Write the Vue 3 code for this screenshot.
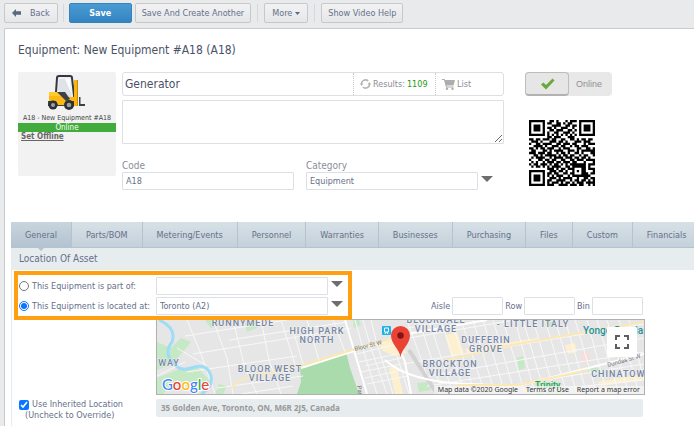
<script setup>
import { ref } from 'vue'

const tabs = ['General', 'Parts/BOM', 'Metering/Events', 'Personnel', 'Warranties', 'Businesses', 'Purchasing', 'Files', 'Custom', 'Financials']
const activeTab = ref('General')
const name = ref('Generator')
const description = ref('')
const code = ref('A18')
const category = ref('Equipment')
const placement = ref('located')
const parent = ref('')
const location = ref('Toronto (A2)')
const slots = ref([
  { label: 'Aisle', id: 'aisle', value: '' },
  { label: 'Row', id: 'row', value: '' },
  { label: 'Bin', id: 'bin', value: '' }
])
const inherited = ref(true)
const online = ref(true)

const qrRows = [
  '11111110011010001011101111111',
  '10000010110011010110001000001',
  '10111010001111001101101011101',
  '10111010110100111001001011101',
  '10111010011011100110101011101',
  '10000010100110011101001000001',
  '11111110101010101010101111111',
  '00000000110111000111000000000',
  '11011011101100110011010110110',
  '01110100011101101000111011100',
  '10011011110011011101100010111',
  '00111101001110110010110111000',
  '11010110111001011100011001101',
  '01100011010111100111010111111',
  '11101110110010110100110100011',
  '00110101111101011011001011001',
  '01011110010111101110110110100',
  '10001101101100110011011101111',
  '01010010111011011101100010001',
  '10110111010110101011111110111',
  '01011010101111001101111110100',
  '00000000111010110111000110111',
  '11111110011101101001010110001',
  '10000010110110011011000111011',
  '10111010101011100101111111100',
  '10111010011101011110010011011',
  '10111010110011110010110110101',
  '10000010101110101101011101111',
  '11111110111001111011101100101'
]
const qrPath = qrRows
  .map((row, y) => [...row].map((c, x) => (c === '1' ? `M${x} ${y}h1v1h-1z` : '')).join(''))
  .join('')

const labels = [
  { t: 'RUNNYMEDE', x: 86, y: 6 },
  { t: 'HIGH PARK', x: 160, y: 14 },
  { t: 'NORTH', x: 160, y: 23 },
  { t: 'BLOOR WEST', x: 113, y: 52 },
  { t: 'VILLAGE', x: 113, y: 61 },
  { t: 'WAY', x: 12, y: 46 },
  { t: 'BLOORDALE', x: 279, y: 3 },
  { t: 'VILLAGE', x: 279, y: 12 },
  { t: 'DUFFERIN', x: 329, y: 23 },
  { t: 'GROVE', x: 329, y: 32 },
  { t: 'BROCKTON', x: 293, y: 47 },
  { t: 'VILLAGE', x: 293, y: 56 },
  { t: '- LITTLE ITALY', x: 376, y: 7 },
  { t: 'CHINATOWN', x: 465, y: 57 }
]
</script>

<template>
  <div class="page">
    <nav class="toolbar" aria-label="Record actions">
      <button class="btn back" type="button">
        <svg width="9" height="8" viewBox="0 0 9 8"><path d="M0 4L4 0V2.300H9V5.700H4V8z" fill="#5b6880" /></svg>
        <span>Back</span>
      </button>
      <i class="sep"></i>
      <button class="btn primary" type="button">Save</button>
      <button class="btn" type="button">Save And Create Another</button>
      <i class="sep wide"></i>
      <button class="btn more" type="button">
        More
        <svg width="5" height="3" viewBox="0 0 5 3"><path d="M0 0H5L2.500 3z" fill="#5b6880" /></svg>
      </button>
      <i class="sep wide"></i>
      <button class="btn" type="button">Show Video Help</button>
    </nav>

    <main class="panel">
      <h1>Equipment: New Equipment #A18 (A18)</h1>

      <section class="summary">
        <div class="card">
          <svg class="forklift" width="38" height="36" viewBox="0 0 38 36">
            <path d="M9 3Q9 1 11 1H23Q25 1 25 3L26 25H17L8 17z" fill="#eef0f2" />
            <path d="M11 4H22L23.500 23H18L10 15z" fill="#dfe2e6" />
            <path d="M17 4H22L23 18z" fill="#fafbfc" />
            <path d="M8 17L9 3Q9 1 11 1H22Q24 1 24 3L26.500 25" fill="none" stroke="#34373d" stroke-width="2" />
            <path d="M1 17H9L17 22H26V30H1z" fill="#fdb913" />
            <path d="M1 17H8L14 21H1z" fill="#ffcb2e" />
            <path d="M9 17H17L22 24L18 26z" fill="#3d4147" />
            <path d="M0 26H8L10 30H18L20 26H28V31H0z" fill="#3d4147" />
            <rect x="26" y="5" width="4" height="26" fill="#fdb411" />
            <rect x="29" y="5" width="1" height="26" fill="#c98b0c" />
            <path d="M31 22V31H37V29H32.500V22z" fill="#3d4147" />
            <circle cx="5" cy="30" r="4.500" fill="#2d3035" /><circle cx="5" cy="30" r="2" fill="#9da1a7" />
            <circle cx="21" cy="30" r="5" fill="#2d3035" /><circle cx="21" cy="30" r="2.300" fill="#9da1a7" />
          </svg>
          <p class="caption">A18 - New Equipment #A18</p>
          <p class="status">Online</p>
          <a class="offline" href="#">Set Offline</a>
        </div>

        <div class="fields">
          <div class="namebar">
            <input v-model="name" class="name" aria-label="Name" />
            <button class="seg results" type="button">
              <svg width="11" height="10" viewBox="0 0 11 10" fill="none" stroke="#b4b4b4" stroke-width="1.600">
                <path d="M1.500 5.500A4 4 0 0 1 8.200 2" /><path d="M9.500 4.500A4 4 0 0 1 2.800 8" />
                <path d="M0 4.500L1.500 7L3.500 4.500zM7.500 5.500L9.500 3L11 5.500z" fill="#b4b4b4" stroke="none" />
              </svg>
              <span>Results:</span>
              <b>1109</b>
            </button>
            <button class="seg list" type="button">
              <svg width="13" height="11" viewBox="0 0 13 11">
                <path d="M0 0H2.500L3 1H13L11.500 6.500H4.500L4.800 7.500H11.500V8.500H4L2 1H0z" fill="#adadad" />
                <circle cx="5" cy="9.700" r="1.200" fill="#adadad" /><circle cx="10.500" cy="9.700" r="1.200" fill="#adadad" />
              </svg>
              List
            </button>
          </div>
          <textarea v-model="description" class="desc" aria-label="Description"></textarea>
          <div class="pair">
            <div class="field">
              <label for="code">Code</label>
              <input id="code" v-model="code" class="box" />
            </div>
            <div class="field">
              <label for="category">Category</label>
              <input id="category" v-model="category" class="box" />
            </div>
            <button class="drop" type="button" aria-label="Choose category"></button>
          </div>
        </div>

        <div class="side">
          <button class="toggle" type="button" role="switch" :aria-checked="online" @click="online = !online">
            <span class="knob">
              <svg width="15" height="12" viewBox="0 0 15 12"><path d="M1 6.500L3.500 4.500L6 7L12.500 .500L14.500 2.500L6 11.500z" fill="#6aa83c" /></svg>
            </span>
            <span class="state">Online</span>
          </button>
          <svg class="qr" width="66" height="66" viewBox="0 0 29 29" role="img" aria-label="QR code">
            <path :d="qrPath" fill="#000" />
          </svg>
        </div>
      </section>

      <div class="tabs" role="tablist">
        <button
          v-for="tab in tabs"
          :key="tab"
          type="button"
          role="tab"
          class="tab"
          :class="{ active: tab === activeTab }"
          :aria-selected="tab === activeTab"
          @click="activeTab = tab"
        >{{ tab }}</button>
      </div>

      <section class="asset">
        <h2>Location Of Asset</h2>
        <div class="placement">
          <div class="highlight">
            <label class="choice"><input v-model="placement" type="radio" name="placement" value="part" />This Equipment is part of:</label>
            <input v-model="parent" class="box" aria-label="Parent equipment" />
            <button class="drop" type="button" aria-label="Choose parent"></button>
            <label class="choice"><input v-model="placement" type="radio" name="placement" value="located" />This Equipment is located at:</label>
            <input v-model="location" class="box" aria-label="Location" />
            <button class="drop" type="button" aria-label="Choose location"></button>
          </div>
          <div class="slots">
            <template v-for="slot in slots" :key="slot.id">
              <label :for="slot.id">{{ slot.label }}</label>
              <input :id="slot.id" v-model="slot.value" class="box" />
            </template>
          </div>
        </div>

        <div class="where">
          <div class="map">
            <svg viewBox="0 0 487 74" preserveAspectRatio="xMinYMin slice" role="img" aria-label="Map">
              <rect width="487" height="74" fill="#e6e6e6" />
              <g fill="#c5e8c5">
                <path d="M0 22L14 28L24 18L34 22L24 34L16 44L0 50z" />
                <path d="M0 58L20 50L40 47L54 62L44 68L20 60L6 74H0z" />
                <path d="M48 0H58L64 5L54 8z" /><path d="M88 3L100 0V8L90 12z" />
                <path d="M196 0H202L204 5L197 8z" />
                <path d="M62 64L70 66L66 74H58z" />
                <path d="M260 63L270 62L274 70L262 72z" />
                <path d="M360 38L366 36L368 48L362 50z" /><path d="M387 0H394L396 6L389 7z" />
                <path d="M430 46L450 50L446 54L432 52z" />
                <path d="M378 62H402L405 74H380z" />
              </g>
              <path d="M143 47L189 32L193 48L202 74H140L144 62z" fill="#a9dbac" />
              <g fill="#fdf0cf">
                <path d="M220 22L238 18L250 33L238 36L226 31z" />
                <path d="M288 15L300 12L307 34L294 36z" />
                <path d="M232 48L240 46L246 74H238z" />
                <path d="M308 29L380 18L381 21L310 33z" />
                <path d="M408 25L418 23L420 32L411 34z" />
                <path d="M440 62L487 54V60L444 66z" />
              </g>
              <path d="M424 33L431 31L433 41L426 44z" fill="#f9dcdc" />
              <g fill="none" stroke="#f8f8f8" stroke-width="1">
                <path d="M30 0L44 34L58 74M56 0L70 38L76 74M76 0L88 48L100 74M104 0L112 40L124 74M124 0L138 44M136 10L146 44M150 0L162 40M176 0L188 32" />
                <path d="M28 16L130 0M36 34L194 8M30 52L140 36M72 20L190 2M60 68L146 56M84 74L136 66M0 56L28 42M20 28L50 46" />
                <path d="M198 0L208 36L220 74M206 0L214 28L230 74M214 0L220 24L236 74M240 36L252 74M202 42L240 34M204 52L244 44M210 64L250 56M200 34L240 24M208 46L244 38M208 58L246 50" />
                <path d="M250 0L270 56L278 74M262 0L286 74M272 0L296 74M284 0L308 74M294 0L318 74M304 0L328 74M316 0L338 74M326 0L348 74M336 0L358 74M346 0L368 74M358 0L378 74M366 0L388 74M376 0L398 74M388 0L410 74M398 0L420 74M408 0L430 74M418 0L440 74M430 0L450 74M440 0L462 74M450 0L472 74M462 0L482 74M472 0L487 60" />
                <path d="M240 20L487 -22M246 44L487 4M262 58L487 18M270 66L487 32M300 74L487 44M350 74L487 60M250 8L330 -6" />
              </g>
              <path d="M252 30L280 74" stroke="#d2d2d2" stroke-width="4" />
              <g fill="none" stroke="#fff" stroke-width="2">
                <path d="M228 40Q252 62 312 64L360 66L487 34" />
                <path d="M144 48L250 14L330 0M188 0L210 74" />
                <path d="M238 18L248 42L254 74" />
              </g>
              <g fill="none" stroke="#fbe8b4" stroke-width="2">
                <path d="M74 68Q84 57 104 55L146 45L192 31L238 18" />
                <path d="M282 42L350 26L487 2M300 65L362 65L430 50" />
              </g>
              <path d="M2 0Q20 8 15 22Q6 34 17 43Q22 52 34 48Q50 42 54 56Q56 68 44 74" fill="none" stroke="#9fdcf6" stroke-width="3" />
              <g class="area">
                <text v-for="l in labels" :key="l.t + l.x" :x="l.x" :y="l.y">{{ l.t }}</text>
              </g>
              <text class="street" x="198" y="31" transform="rotate(-14 198 31)">Bloor St W</text>
              <text class="street" x="451" y="47" transform="rotate(-16 451 47)">Dundas St W</text>
              <text class="street" x="200" y="66" transform="rotate(80 200 66)">Parkside</text>
              <text class="place" x="426" y="14">Yonge-Dundas</text>
              <text class="park" x="378" y="68">Trinity</text>
              <rect x="225" y="6" width="9" height="9" rx="1" fill="#1db2e8" />
              <path d="M227.500 8H231.500V12H227.500zM228 14L229 12M231 14L230 12" fill="none" stroke="#fff" />
              <path d="M243.500 37C242.500 29 234 24 234 15.500A9.500 9.500 0 0 1 253 15.500C253 24 244.500 29 243.500 37z" fill="#ea4335" />
              <circle cx="243.500" cy="15.500" r="3.200" fill="#811411" />
              <text class="google" x="5" y="70"><tspan fill="#4285f4">G</tspan><tspan fill="#ea4335">o</tspan><tspan fill="#fbbc05">o</tspan><tspan fill="#4285f4">g</tspan><tspan fill="#34a853">l</tspan><tspan fill="#ea4335">e</tspan></text>
            </svg>
            <button class="full" type="button" aria-label="Toggle fullscreen view">
              <svg width="14" height="14" viewBox="0 0 14 14"><path d="M1 5V1H5M9 1H13V5M13 9V13H9M5 13H1V9" fill="none" stroke="#5f5f5f" stroke-width="2" /></svg>
            </button>
            <div class="credits">
              <span>Map data ©2020 Google</span>
              <a href="#">Terms of Use</a>
              <a href="#">Report a map error</a>
            </div>
          </div>
          <label class="inherit">
            <input v-model="inherited" type="checkbox" />
            <span>Use Inherited Location</span>
            <span class="hint">(Uncheck to Override)</span>
          </label>
          <p class="address">35 Golden Ave, Toronto, ON, M6R 2J5, Canada</p>
        </div>
      </section>
    </main>
  </div>
</template>

<style>
body {
  margin: 0;
  background: #e9eaec;
  overflow: hidden;
}
</style>

<style scoped>
.page,
.page button,
.page input,
.page textarea {
  font-family: "DejaVu Sans Condensed", "Noto Sans", sans-serif;
  font-size: 9px;
  color: #66708a;
}
.page *,
.page *::before {
  box-sizing: border-box;
}
.page {
  min-height: 100vh;
  display: flex;
  flex-direction: column;
  overflow: hidden;
}
button {
  margin: 0;
  padding: 0;
  border: 0;
  background: none;
  white-space: nowrap;
}
p,
h1,
h2 {
  margin: 0;
  font-weight: 400;
}
.toolbar {
  display: flex;
  align-items: center;
  gap: 3px;
  padding: 3px 4px 5px;
}
.btn {
  height: 20px;
  padding: 0 6px;
  display: flex;
  align-items: center;
  gap: 3px;
  border: 1px solid #c6c8cc;
  border-radius: 2px;
  background: linear-gradient(#f2f2f3, #e6e7e9);
}
.btn.back {
  gap: 9px;
  padding: 0 7px;
}
.btn.more {
  padding: 0 7px;
}
.page .btn.primary {
  width: 63px;
  justify-content: center;
  color: #fff;
  font-weight: 700;
  border-color: #3583bb;
  background: linear-gradient(#4a9bd4, #3484c2);
}
.sep {
  width: 1px;
  height: 18px;
  margin: 0 2px;
  background: #d6d8db;
}
.sep.wide {
  margin: 0 3px;
}
.panel {
  flex: 1;
  margin-left: 4px;
  padding-left: 6px;
  border: solid #c9cbce;
  border-width: 1px 0 0 1px;
  border-radius: 2px 0 0;
  background: #fff;
}
h1 {
  margin: 12px 7px 13px;
  font-size: 12px;
  line-height: 18px;
  color: #4a5268;
}
.summary {
  display: flex;
  align-items: flex-start;
  padding: 0 7px 32px;
}
.card {
  width: 98px;
  height: 104px;
  margin-right: 6px;
  padding-top: 3px;
  display: flex;
  flex-direction: column;
  background: #f2f2f2;
  border-radius: 2px;
}
.forklift {
  margin: 0 0 3px 30px;
}
.caption,
.status {
  font-size: 7px;
  line-height: 9px;
  text-align: center;
  white-space: nowrap;
  color: #444;
}
.status {
  color: #fff;
  background: #41ab3c;
  font-size: 8px;
}
.offline {
  padding: 0 3px;
  font-size: 8px;
  line-height: 10px;
  font-weight: 700;
  color: #666;
}
.fields {
  width: 382px;
  margin-right: 21px;
}
.namebar {
  display: flex;
  height: 24px;
  border: 1px solid #dcdfe6;
  border-radius: 3px;
}
.page .name {
  flex: 1;
  min-width: 0;
  padding: 0 2px;
  border: 0;
  background: none;
  font-size: 12px;
  color: #4a5268;
}
.page .seg {
  display: flex;
  align-items: center;
  gap: 2px;
  padding: 0 6px;
  border-left: 1px dotted #c9c9cc;
  color: #8b8d92;
}
.results b {
  font-weight: 400;
  color: #1f9a10;
}
.results {
  width: 82px;
}
.list {
  width: 68px;
}
.desc {
  display: block;
  width: 100%;
  height: 44px;
  margin: 4px 0 15px;
  border: 1px solid #dcdfe6;
  border-radius: 1px;
}
.pair {
  display: flex;
  align-items: flex-end;
  gap: 12px;
}
.field {
  width: 172px;
}
.field label {
  display: block;
  font-size: 10px;
  line-height: 13px;
  color: #8b8f9b;
}
.box {
  display: block;
  width: 100%;
  height: 18px;
  padding: 0 3px;
  border: 1px solid #dcdfe6;
  border-radius: 1px;
  background: #fff;
}
.drop {
  width: 12px;
  height: 18px;
  display: flex;
  align-items: center;
}
.pair .drop {
  margin-left: -9px;
}
.drop::before {
  content: "";
  width: 100%;
  height: 6px;
  margin-bottom: 4px;
  background: #6e6e6e;
  clip-path: polygon(0 0, 100% 0, 50% 100%);
}
.side {
  display: flex;
  flex-direction: column;
  gap: 24px;
}
.toggle {
  display: flex;
  width: 87px;
  height: 24px;
  border-radius: 4px;
  background: #e8e8e8;
}
.knob {
  width: 44px;
  display: flex;
  align-items: center;
  justify-content: center;
  border: 1px solid #bdbdbd;
  border-bottom: 2px solid #b2b2b2;
  border-radius: 4px;
  background: #e6e6e6;
}
.page .state {
  flex: 1;
  padding-right: 3px;
  line-height: 24px;
  font-family: "Liberation Sans", sans-serif;
  color: #909090;
}
.qr {
  margin-left: 4px;
}
.tabs {
  display: flex;
  height: 26px;
  white-space: nowrap;
  background: #c8d3dc;
}
.tab {
  position: relative;
  flex: none;
  padding: 0 14px;
  border-right: 1px solid #b3c3d0;
  border-bottom: 1px solid #b3c3d0;
  background: linear-gradient(#d6e0e7, #c5d1da);
}
.tab.active {
  background: linear-gradient(#c8d5de, #b3c3d0);
}
.tab.active::before {
  content: "";
  position: absolute;
  top: 100%;
  left: 50%;
  margin-left: -4px;
  border: solid transparent;
  border-width: 4px 4px 0;
  border-top-color: #b3c3d0;
}
.asset {
  border-left: 1px solid #e7ecef;
}
h2 {
  padding: 0 7px;
  font-size: 10px;
  line-height: 22px;
  background: #e7ecef;
}
.placement {
  display: flex;
  justify-content: space-between;
  align-items: flex-end;
  padding: 1px 51px 0 2px;
}
.highlight {
  position: relative;
  z-index: 1;
  display: grid;
  grid-template-columns: 134px 172px 12px;
  align-items: center;
  gap: 2px 3px;
  padding: 2px 5px 1px 1px;
  border: 4px solid #ffa012;
  background: #fff;
}
.choice {
  display: flex;
  align-items: center;
  gap: 3px;
  white-space: nowrap;
}
.choice input,
.inherit input {
  width: 10px;
  height: 10px;
  margin: 0;
  flex: none;
  accent-color: #0a75ff;
}
.slots {
  display: flex;
  align-items: center;
  gap: 2px;
  margin-bottom: 5px;
}
.slots .box {
  width: 51px;
}
.where {
  display: grid;
  grid-template-columns: 137px minmax(0, 1fr);
  margin-top: -1px;
  padding: 0 49px 8px 7px;
  row-gap: 4px;
}
.map {
  position: relative;
  grid-column: 2;
  height: 76px;
  border: 1px solid #b0b0b0;
  overflow: hidden;
}
.map > svg {
  display: block;
  width: 100%;
  height: 100%;
}
.area {
  font: 500 9px Roboto, sans-serif;
  letter-spacing: 1px;
  text-anchor: middle;
  fill: #7585a3;
  stroke: #f2f2f2;
  stroke-width: 1;
  paint-order: stroke;
}
.street {
  font: 6px Roboto, sans-serif;
  fill: #70757a;
}
.place {
  font: 500 10px Roboto, sans-serif;
  fill: #2193a0;
}
.park {
  font: 500 9px Roboto, sans-serif;
  fill: #2e9d5a;
}
.google {
  font: 500 15px Lato, sans-serif;
  stroke: #fff;
  stroke-width: 2;
  paint-order: stroke;
}
.full {
  position: absolute;
  top: 7px;
  right: 7px;
  width: 30px;
  height: 30px;
  display: flex;
  align-items: center;
  justify-content: center;
  background: #fff;
  border-radius: 1px;
}
.credits {
  position: absolute;
  right: 0;
  bottom: 0;
  display: flex;
  gap: 8px;
  padding: 0 4px;
  font: 7px/8px "Noto Sans", sans-serif;
  background: rgba(245, 245, 245, 0.75);
}
.credits span,
.credits a {
  color: #333;
  text-decoration: none;
}
.inherit {
  display: grid;
  grid-template-columns: 10px 1fr;
  column-gap: 3px;
  align-content: start;
  align-items: center;
  line-height: 11px;
}
.hint {
  grid-column: 1 / 3;
  padding-left: 6px;
}
.address {
  height: 18px;
  padding: 0 5px;
  margin-right: 2px;
  font: 700 8px/18px "Noto Sans", sans-serif;
  color: #999;
  border-radius: 2px;
  background: #e7ecef;
}
</style>
